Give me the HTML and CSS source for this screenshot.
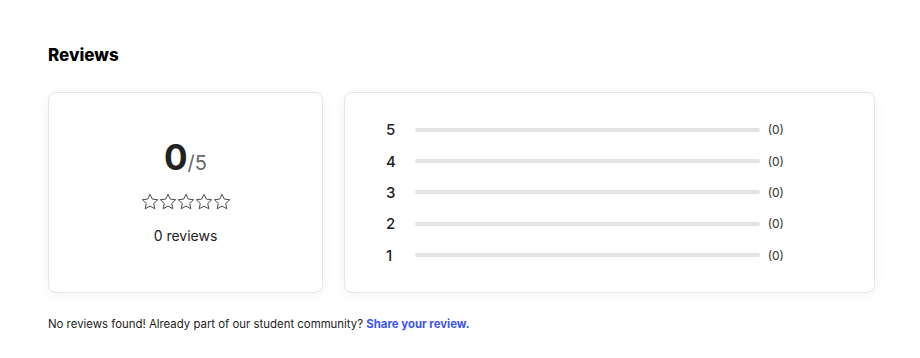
FILE: index.html
```html
<!DOCTYPE html>
<html lang="en">
<head>
  <meta charset="UTF-8" />
  <title>Reviews</title>
  <link rel="stylesheet" href="styles.css">
</head>
<body>
  <section class="reviews">
    <h2 class="reviews-title">Reviews</h2>
    <div class="reviews-grid">
      <div class="card summary">
        <div class="score"><span class="score-value">0</span><span class="score-max">/5</span></div>
        <div class="stars">
          <svg viewBox="0 0 24 24"><polygon points="12,1.8 15.1,8.1 22.2,9 17,13.9 18.4,21 12,17.5 5.6,21 7,13.9 1.8,9 8.9,8.1"/></svg>
          <svg viewBox="0 0 24 24"><polygon points="12,1.8 15.1,8.1 22.2,9 17,13.9 18.4,21 12,17.5 5.6,21 7,13.9 1.8,9 8.9,8.1"/></svg>
          <svg viewBox="0 0 24 24"><polygon points="12,1.8 15.1,8.1 22.2,9 17,13.9 18.4,21 12,17.5 5.6,21 7,13.9 1.8,9 8.9,8.1"/></svg>
          <svg viewBox="0 0 24 24"><polygon points="12,1.8 15.1,8.1 22.2,9 17,13.9 18.4,21 12,17.5 5.6,21 7,13.9 1.8,9 8.9,8.1"/></svg>
          <svg viewBox="0 0 24 24"><polygon points="12,1.8 15.1,8.1 22.2,9 17,13.9 18.4,21 12,17.5 5.6,21 7,13.9 1.8,9 8.9,8.1"/></svg>
        </div>
        <div class="review-count">0 reviews</div>
      </div>
      <div class="card breakdown">
        <div class="row"><span class="row-label">5</span><div class="bar"><div class="bar-fill" style="width:0%"></div></div><span class="row-count">(0)</span></div>
        <div class="row"><span class="row-label">4</span><div class="bar"><div class="bar-fill" style="width:0%"></div></div><span class="row-count">(0)</span></div>
        <div class="row"><span class="row-label">3</span><div class="bar"><div class="bar-fill" style="width:0%"></div></div><span class="row-count">(0)</span></div>
        <div class="row"><span class="row-label">2</span><div class="bar"><div class="bar-fill" style="width:0%"></div></div><span class="row-count">(0)</span></div>
        <div class="row"><span class="row-label">1</span><div class="bar"><div class="bar-fill" style="width:0%"></div></div><span class="row-count">(0)</span></div>
      </div>
    </div>
    <p class="no-reviews">No reviews found! Already part of our student community? <a href="#" class="share-link">Share your review.</a></p>
  </section>
</body>
</html>
```

FILE: styles.css
```css
body {
  margin: 0;
  font-family: 'Inter', 'Liberation Sans', sans-serif;
  background: #fff;
  color: #111;
}
.reviews {
  padding: 44px 45px 0 48px;
}
.reviews-title {
  margin: 0 0 26px;
  font-size: 17px;
  font-weight: 800;
  line-height: 22px;
  color: #000;
}
.reviews-grid {
  display: flex;
  gap: 21px;
}
.card {
  background: #fff;
  border: 1px solid #e6e6e6;
  border-radius: 8px;
  box-shadow: 0 2px 12px rgba(0, 0, 0, 0.05);
  height: 201px;
  box-sizing: border-box;
}
.summary {
  width: 275px;
  flex: none;
  display: flex;
  flex-direction: column;
  align-items: center;
  padding-top: 44px;
}
.score {
  line-height: 40px;
}
.score-value {
  font-size: 35px;
  font-weight: 700;
  color: #222;
}
.score-max {
  font-size: 20px;
  color: #666;
}
.stars {
  display: flex;
  margin-top: 9px;
}
.stars svg {
  width: 18px;
  height: 18px;
  fill: none;
  stroke: #444;
  stroke-width: 1.3;
  stroke-linejoin: round;
}
.review-count {
  margin-top: 16px;
  font-size: 14px;
  color: #222;
}
.breakdown {
  flex: 1;
  display: flex;
  flex-direction: column;
  justify-content: center;
  padding: 0 90px 0 41px;
}
.row {
  display: flex;
  align-items: center;
  height: 31.3px;
}
.row-label {
  width: 29px;
  font-size: 15px;
  font-weight: 500;
  color: #222;
}
.bar {
  flex: 1;
  height: 4px;
  background: #e3e3e3;
  border-radius: 2px;
}
.bar-fill {
  height: 100%;
  background: #4659f2;
  border-radius: 2px;
}
.row-count {
  margin-left: 8px;
  font-size: 12px;
  color: #333;
}
.no-reviews {
  margin: 24px 0 0;
  font-size: 11.4px;
  color: #222;
}
.share-link {
  color: #3d55f5;
  font-weight: 700;
  text-decoration: none;
}
```
